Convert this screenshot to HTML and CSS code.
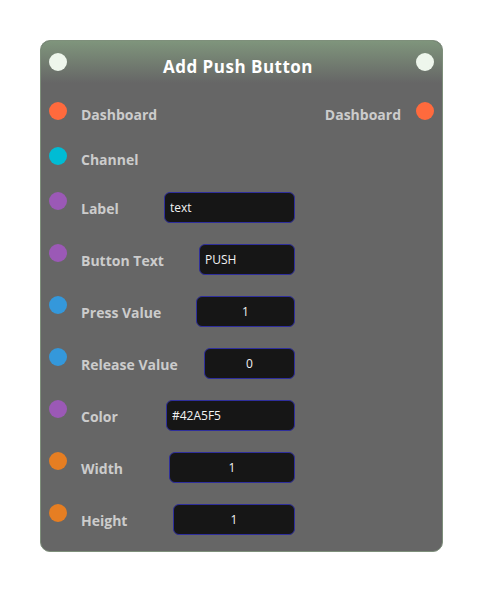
FILE: index.html
```html
<!DOCTYPE html>
<html lang="en">
<head>
<meta charset="utf-8">
<title>Add Push Button</title>
<link rel="stylesheet" href="styles.css">
</head>
<body>
<div class="node">
  <div class="node-header">
    <span class="dot dot--exec"></span>
    <div class="node-title">Add Push Button</div>
    <span class="dot dot--exec"></span>
  </div>
  <div class="node-body">
    <div class="row row--slot">
      <span class="dot dot--dash"></span>
      <span class="label">Dashboard</span>
      <span class="out">
        <span class="label">Dashboard</span>
        <span class="dot dot--dash"></span>
      </span>
    </div>
    <div class="row row--slot">
      <span class="dot dot--channel"></span>
      <span class="label">Channel</span>
    </div>
    <div class="row row--field">
      <span class="dot dot--string"></span>
      <span class="label">Label</span>
      <input class="field field--text w-label" type="text" value="text" readonly>
    </div>
    <div class="row row--field">
      <span class="dot dot--string"></span>
      <span class="label">Button Text</span>
      <input class="field field--text w-btntext" type="text" value="PUSH" readonly>
    </div>
    <div class="row row--field">
      <span class="dot dot--number"></span>
      <span class="label">Press Value</span>
      <input class="field field--num w-press" type="text" value="1" readonly>
    </div>
    <div class="row row--field">
      <span class="dot dot--number"></span>
      <span class="label">Release Value</span>
      <input class="field field--num w-release" type="text" value="0" readonly>
    </div>
    <div class="row row--field">
      <span class="dot dot--string"></span>
      <span class="label">Color</span>
      <input class="field field--text w-color" type="text" value="#42A5F5" readonly>
    </div>
    <div class="row row--field">
      <span class="dot dot--int"></span>
      <span class="label">Width</span>
      <input class="field field--num w-width" type="text" value="1" readonly>
    </div>
    <div class="row row--field">
      <span class="dot dot--int"></span>
      <span class="label">Height</span>
      <input class="field field--num w-height" type="text" value="1" readonly>
    </div>
  </div>
</div>
</body>
</html>
```
FILE: styles.css
```css
* { box-sizing: border-box; }
html, body { margin: 0; background: #ffffff; }
body {
  padding: 40px 0 0 40px;
  font-family: "Open Sans", "Noto Sans", sans-serif;
}
.node {
  width: 403px;
  height: 512px;
  background: #666666;
  border: 1px solid #7e8f7b;
  border-radius: 10px;
  overflow: hidden;
}
.node-header {
  display: flex;
  align-items: flex-start;
  height: 61px;
  padding: 12px 8px 0;
  background: linear-gradient(#7f957c 0px, #666666 42px);
}
.node-title {
  flex: 1;
  text-align: center;
  color: #ffffff;
  font-size: 17px;
  font-weight: 700;
  letter-spacing: 0.5px;
  line-height: 20px;
  margin-top: 4px;
  padding-right: 7px;
}
.dot {
  flex: none;
  width: 18px;
  height: 18px;
  border-radius: 50%;
}
.dot--exec { background: #eef6ec; }
.dot--dash { background: #ff6a3d; }
.dot--channel { background: #00bcd4; }
.dot--string { background: #9b59b6; }
.dot--number { background: #3498db; }
.dot--int { background: #e67e22; }
.node-body {
  padding: 0 8px;
}
.row {
  display: flex;
  align-items: flex-start;
}
.row--slot { height: 45px; }
.row--slot .label { margin-top: 4px; }
.row--field {
  height: 31px;
  margin-bottom: 21px;
  width: 246px;
}
.label {
  color: #cccccc;
  font-size: 14px;
  font-weight: 700;
  line-height: 18px;
  margin-left: 14px;
  white-space: nowrap;
}
.row--field .label {
  align-self: center;
  margin-top: 2px;
}
.out {
  margin-left: auto;
  display: flex;
  align-items: flex-start;
}
.out .label {
  margin: 4px 15px 0 0;
}
.field {
  margin-left: auto;
  height: 31px;
  background: #161616;
  border: 1px solid #2e2e9c;
  border-radius: 6px;
  color: #f2f2f2;
  font-family: "Open Sans", "Noto Sans", sans-serif;
  font-size: 12px;
  line-height: 16px;
  padding: 0 5px;
  outline: none;
}
.field--num { text-align: center; }
.w-label { width: 131px; }
.w-btntext { width: 96px; }
.w-press { width: 99px; }
.w-release { width: 91px; }
.w-color { width: 129px; }
.w-width { width: 126px; }
.w-height { width: 122px; }
```
